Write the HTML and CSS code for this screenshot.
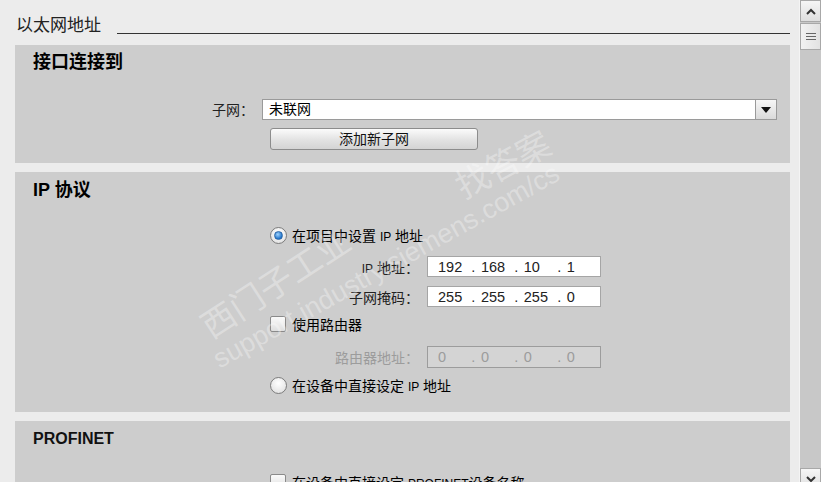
FILE: index.html
```html
<!DOCTYPE html>
<html>
<head>
	<meta charset="utf-8">
	<title>以太网地址</title>
	<link rel="stylesheet" href="styles.css">
</head>
<body>
	<div class="window">
		<div class="content">
			<div class="group-title">
				<span class="group-name">以太网地址</span>
				<i class="rule"></i>
			</div>

			<section class="panel iface">
				<h3 class="panel-title">接口连接到</h3>
				<div class="row subnet-row">
					<label class="lbl">子网：</label>
					<div class="select">
						<span class="select-val">未联网</span>
						<span class="select-btn"><i class="tri"></i></span>
					</div>
				</div>
				<div class="row btn-row">
					<button class="btn">添加新子网</button>
				</div>
			</section>

			<section class="panel ip">
				<h3 class="panel-title">IP 协议</h3>
				<div class="opts">
					<div class="opt opt-first">
						<span class="radio on"><i></i></span>
						<span>在项目中设置 <small>IP</small> 地址</span>
					</div>
					<div class="ip-row r-addr">
						<label class="ip-lbl"><small>IP</small> 地址：</label>
						<div class="ip-field">
							<span class="oct">192</span><span class="dot">.</span>
							<span class="oct">168</span><span class="dot">.</span>
							<span class="oct">10</span><span class="dot">.</span>
							<span class="oct">1</span>
						</div>
					</div>
					<div class="ip-row r-mask">
						<label class="ip-lbl">子网掩码：</label>
						<div class="ip-field">
							<span class="oct">255</span><span class="dot">.</span>
							<span class="oct">255</span><span class="dot">.</span>
							<span class="oct">255</span><span class="dot">.</span>
							<span class="oct">0</span>
						</div>
					</div>
					<div class="opt opt-check">
						<span class="check"></span>
						<span>使用路由器</span>
					</div>
					<div class="ip-row r-router off">
						<label class="ip-lbl">路由器地址：</label>
						<div class="ip-field">
							<span class="oct">0</span><span class="dot">.</span>
							<span class="oct">0</span><span class="dot">.</span>
							<span class="oct">0</span><span class="dot">.</span>
							<span class="oct">0</span>
						</div>
					</div>
					<div class="opt opt-last">
						<span class="radio"></span>
						<span>在设备中直接设定 <small>IP</small> 地址</span>
					</div>
				</div>
			</section>

			<section class="panel pn">
				<h3 class="panel-title pn-title">PROFINET</h3>
				<div class="opts">
					<div class="opt opt-pn">
						<span class="check"></span>
						<span>在设备中直接设定 <small>PROFINET</small>设备名称</span>
					</div>
				</div>
			</section>

			<!-- 水印 -->
			<div class="wm wm1">西门子工业</div>
			<div class="wm wm2">support.industry.siemens.com/cs</div>
			<div class="wm wm3">找答案</div>
		</div>

		<div class="scrollbar">
			<div class="sb-btn sb-up">
				<svg width="10" height="7" viewBox="0 0 10 7"><path d="M1 6 L5 2 L9 6" fill="none" stroke="#333" stroke-width="2"/></svg>
			</div>
			<div class="sb-thumb">
				<i></i><i></i><i></i>
			</div>
			<div class="sb-track"></div>
			<div class="sb-btn sb-down">
				<svg width="10" height="7" viewBox="0 0 10 7"><path d="M1 1 L5 5 L9 1" fill="none" stroke="#333" stroke-width="2"/></svg>
			</div>
		</div>
	</div>
</body>
</html>
```

FILE: styles.css
```css
body{
	margin: 0;
	overflow: hidden;
	background-color: #ececec;
	font-family: "Liberation Sans", "Noto Sans CJK SC", sans-serif;
	font-size: 14px;
	color: #000;
}
.window{
	display: flex;
	width: 821px;
	height: 482px;
	overflow: hidden;
}
.content{
	position: relative;
	flex: 1;
	padding: 0 9px 0 15px;
	overflow: hidden;
}
small{
	font-size: 12px;
}

/* 分组标题 */
.group-title{
	display: flex;
	height: 22px;
	padding-top: 15px;
	margin-bottom: 8px;
	line-height: 22px;
}
.group-name{
	padding-left: 1px;
	font-size: 17px;
	color: #222;
}
.rule{
	flex: 1;
	align-self: flex-start;
	height: 0;
	margin: 18px 0 0 16px;
	border-top: 1px solid #333;
}

/* 面板 */
.panel{
	margin-bottom: 9px;
	padding: 7px 13px 13px 18px;
	background-color: #cdcdcd;
}
.panel-title{
	margin: 0;
	height: 20px;
	line-height: 20px;
	font-size: 18px;
	font-weight: bold;
}
.row{
	display: flex;
	align-items: center;
}
.subnet-row{
	margin-top: 26px;
	height: 22px;
}
.lbl{
	width: 229px;
	padding-right: 8px;
	box-sizing: border-box;
	text-align: right;
	font-size: 14px;
	color: #222;
}
.select{
	flex: 1;
	display: flex;
	height: 21px;
	background-color: #fff;
	border: 1px solid #9a9a9a;
	box-sizing: border-box;
}
.select-val{
	flex: 1;
	padding-left: 6px;
	line-height: 19px;
	font-size: 14px;
}
.select-btn{
	display: flex;
	align-items: center;
	justify-content: center;
	width: 20px;
	background: linear-gradient(#f6f6f6, #dadada);
	border-left: 1px solid #9a9a9a;
}
.tri{
	width: 0;
	height: 0;
	border-left: 5px solid transparent;
	border-right: 5px solid transparent;
	border-top: 6px solid #111;
	margin-top: 1px;
}
.btn-row{
	margin-top: 8px;
	padding-left: 237px;
}
.btn{
	width: 208px;
	height: 22px;
	padding: 0;
	background: linear-gradient(#fbfbfb, #e2e2e2 55%, #d4d4d4);
	border: 1px solid #8c8c8c;
	border-radius: 3px;
	font-family: inherit;
	font-size: 14px;
	line-height: 18px;
	color: #111;
}

/* IP 协议 */
.ip{
	padding-top: 8px;
	padding-bottom: 17px;
}
.opts{
	padding-left: 237px;
}
.opt{
	display: flex;
	align-items: center;
	height: 20px;
	font-size: 14px;
}
.opt-first{
	margin-top: 25px;
}
.opt-check{
	margin-top: 7px;
}
.opt-last{
	margin-top: 7px;
}
.radio{
	display: flex;
	align-items: center;
	justify-content: center;
	width: 17px;
	height: 17px;
	margin-right: 5px;
	box-sizing: border-box;
	border: 1px solid #7c7c7c;
	border-radius: 50%;
	background: radial-gradient(circle at 50% 35%, #ffffff, #dcdcdc);
}
.radio i{
	width: 9px;
	height: 9px;
	border-radius: 50%;
	background: radial-gradient(circle at 40% 35%, #9fd3ff, #1f73c9 70%);
	border: 1px solid #2c67a8;
	box-sizing: border-box;
}
.check{
	width: 16px;
	height: 16px;
	margin-right: 6px;
	box-sizing: border-box;
	border: 1px solid #8a8a8a;
	border-radius: 2px;
	background: linear-gradient(#fafafa, #dedede);
}
.ip-row{
	display: flex;
	align-items: center;
}
.r-addr{
	margin-top: 11px;
}
.r-mask{
	margin-top: 9px;
}
.r-router{
	margin-top: 12px;
}
.ip-lbl{
	width: 157px;
	padding-right: 8px;
	box-sizing: border-box;
	text-align: right;
	font-size: 14px;
	color: #222;
}
.ip-field{
	display: flex;
	align-items: center;
	width: 174px;
	height: 21px;
	padding-left: 10px;
	box-sizing: border-box;
	background-color: #fff;
	border: 1px solid #a5a5a5;
	font-size: 14.5px;
	color: #222;
}
.oct{
	width: 35px;
}
.dot{
	width: 10px;
}
.off .ip-lbl{
	color: #9c9c9c;
}
.off .ip-field{
	height: 22px;
	background-color: #d4d4d4;
	border-color: #9c9c9c;
	color: #9c9c9c;
}

/* PROFINET */
.pn{
	padding-top: 8px;
}
.pn-title{
	font-weight: bold;
	font-size: 16px;
	color: #111;
}
.opt-pn{
	margin-top: 23px;
}

/* 水印 */
.wm{
	position: absolute;
	white-space: nowrap;
	line-height: 1;
	color: rgba(255,255,255,0.32);
	transform-origin: left bottom;
	pointer-events: none;
}
.wm1{
	left: 214px;
	top: 310px;
	font-size: 34px;
	transform: rotate(-33deg);
}
.wm2{
	left: 222px;
	top: 346px;
	font-size: 27px;
	transform: rotate(-29deg);
}
.wm3{
	left: 466px;
	top: 170px;
	font-size: 34px;
	transform: rotate(-28deg);
}

/* 滚动条 */
.scrollbar{
	display: flex;
	flex-direction: column;
	width: 22px;
	background-color: #c8c8c8;
	border-left: 1px solid #f4f4f4;
	box-sizing: border-box;
}
.sb-btn{
	display: flex;
	align-items: center;
	justify-content: center;
	height: 22px;
	box-sizing: border-box;
	background: linear-gradient(#f6f6f6, #dedede);
	border: 1px solid #a8a8a8;
}
.sb-up{
	margin-bottom: 1px;
}
.sb-thumb{
	display: flex;
	flex-direction: column;
	align-items: center;
	justify-content: center;
	gap: 2px;
	height: 27px;
	box-sizing: border-box;
	background: linear-gradient(90deg, #f2f2f2, #e2e2e2);
	border: 1px solid #a8a8a8;
}
.sb-thumb i{
	width: 10px;
	height: 1px;
	background-color: #666;
}
.sb-track{
	flex: 1;
}
.sb-down{
	flex-shrink: 0;
	margin-bottom: -8px;
}
```
